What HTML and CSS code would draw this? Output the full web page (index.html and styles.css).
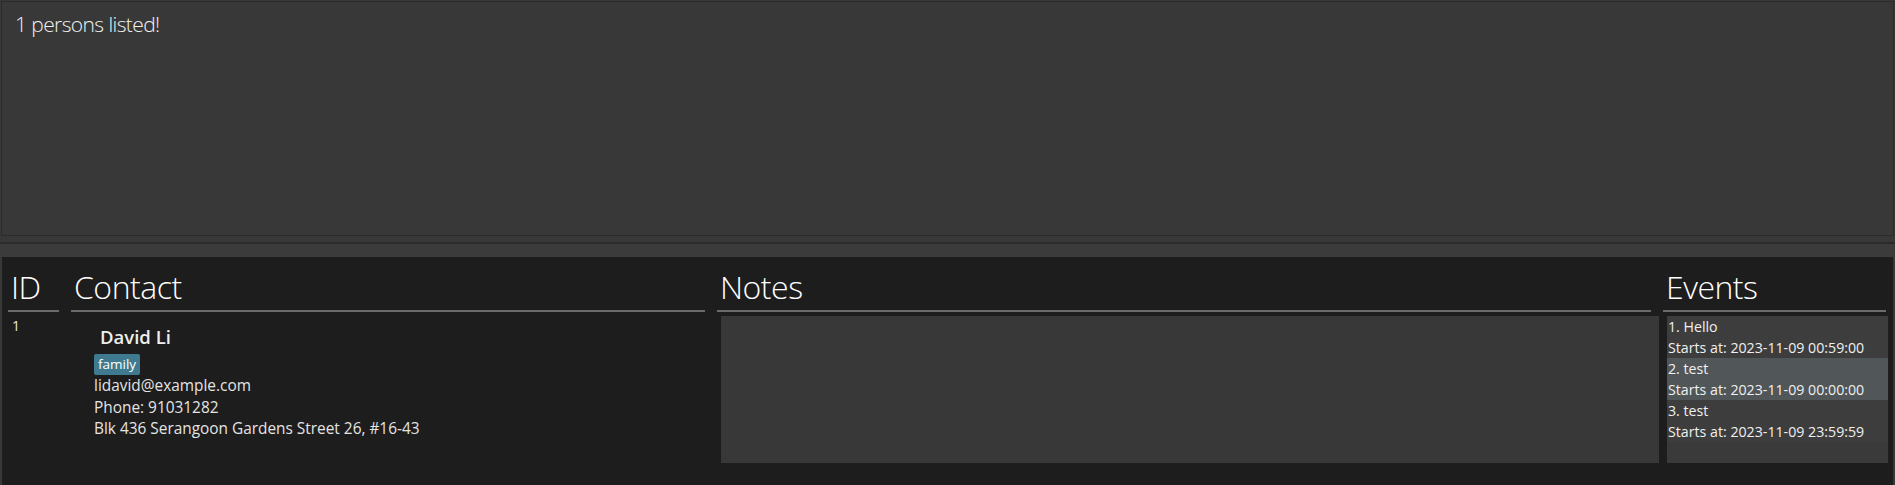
FILE: index.html
```html
<!DOCTYPE html>
<html lang="en">
<head>
<meta charset="utf-8">
<title>Address Book</title>
<link rel="stylesheet" href="styles.css">
</head>
<body>
<div class="app">
  <div class="result">1 persons listed!</div>
  <div class="splitter"><div class="splitter-line"></div></div>
  <div class="panel">
    <div class="col">
      <div class="col-head">ID</div>
      <div class="id-body">1</div>
    </div>
    <div class="col">
      <div class="col-head">Contact</div>
      <div class="card">
        <div class="name">David Li</div>
        <div class="tags"><span class="tag">family</span></div>
        <div class="detail">lidavid@example.com</div>
        <div class="detail">Phone: 91031282</div>
        <div class="detail">Blk 436 Serangoon Gardens Street 26, #16-43</div>
      </div>
    </div>
    <div class="col">
      <div class="col-head">Notes</div>
      <div class="notes-box"></div>
    </div>
    <div class="col">
      <div class="col-head">Events</div>
      <div class="events">
        <div class="event"><div>1. Hello</div><div>Starts at: 2023-11-09 00:59:00</div></div>
        <div class="event event-alt"><div>2. test</div><div>Starts at: 2023-11-09 00:00:00</div></div>
        <div class="event"><div>3. test</div><div>Starts at: 2023-11-09 23:59:59</div></div>
      </div>
    </div>
  </div>
</div>
</body>
</html>
```
FILE: styles.css
```css
html, body {
  margin: 0;
  padding: 0;
  height: 100%;
  background: #383838;
  overflow: hidden;
}

.app {
  display: flex;
  flex-direction: column;
  height: 485px;
  font-family: "Open Sans", "Noto Sans", sans-serif;
  color: #ececec;
}

.result {
  margin: 1px 1px 0 1px;
  border: 1px solid #2b2b2b;
  background: #383838;
  box-sizing: content-box;
  padding: 8px 13px 0;
  height: 225px;
  font-size: 21px;
  font-weight: 300;
  letter-spacing: -0.6px;
  line-height: 28px;
  color: #f2f2f2;
}

.splitter {
  height: 21px;
  display: flex;
  flex-direction: column;
}

.splitter-line {
  margin-top: 6px;
  height: 2px;
  background: #2b2b2b;
}

.splitter::after {
  content: "";
  flex: 1;
  background: #3b3b3b;
}

.panel {
  flex: 1;
  margin: 0 2px 0 2px;
  background: #1d1d1d;
  display: grid;
  grid-template-columns: 51px 634px 934px 223px;
  column-gap: 12px;
  padding: 0 7px 0 6px;
  align-items: start;
}

.col {
  display: flex;
  flex-direction: column;
  min-width: 0;
}

.col-head {
  padding: 12px 0 5px 3px;
  font-size: 32px;
  font-weight: 300;
  letter-spacing: -0.5px;
  line-height: 36px;
  color: #ffffff;
  border-bottom: 2px solid #6b6b6b;
  white-space: nowrap;
}

.id-body {
  padding: 4px 0 0 4px;
  font-size: 14px;
  line-height: 20px;
  color: #f0e6d6;
}

.card {
  padding: 13px 0 0 23px;
}

.name {
  padding-left: 6px;
  font-size: 18.5px;
  font-weight: 600;
  line-height: 24px;
  color: #eeeeee;
}

.tags {
  margin-top: 5px;
  display: flex;
}

.tag {
  background: #3e7b91;
  color: #ffffff;
  font-size: 13.5px;
  line-height: 19px;
  padding: 1px 4px;
  border-radius: 2px;
}

.detail {
  font-size: 15.4px;
  line-height: 21.7px;
  color: #e4e4e4;
  white-space: nowrap;
}

.notes-box {
  margin: 4px -8px 0 4px;
  height: 147px;
  background: #383838;
}

.events {
  margin: 4px -2px 0 4px;
  height: 147px;
  background: #3a3a3a;
  display: flex;
  flex-direction: column;
}

.event {
  height: 42px;
  padding-left: 1px;
  font-size: 14.2px;
  line-height: 21px;
  color: #f0f0f0;
  background: #3d3d3d;
  white-space: nowrap;
}

.event-alt {
  background: #515658;
}
```
